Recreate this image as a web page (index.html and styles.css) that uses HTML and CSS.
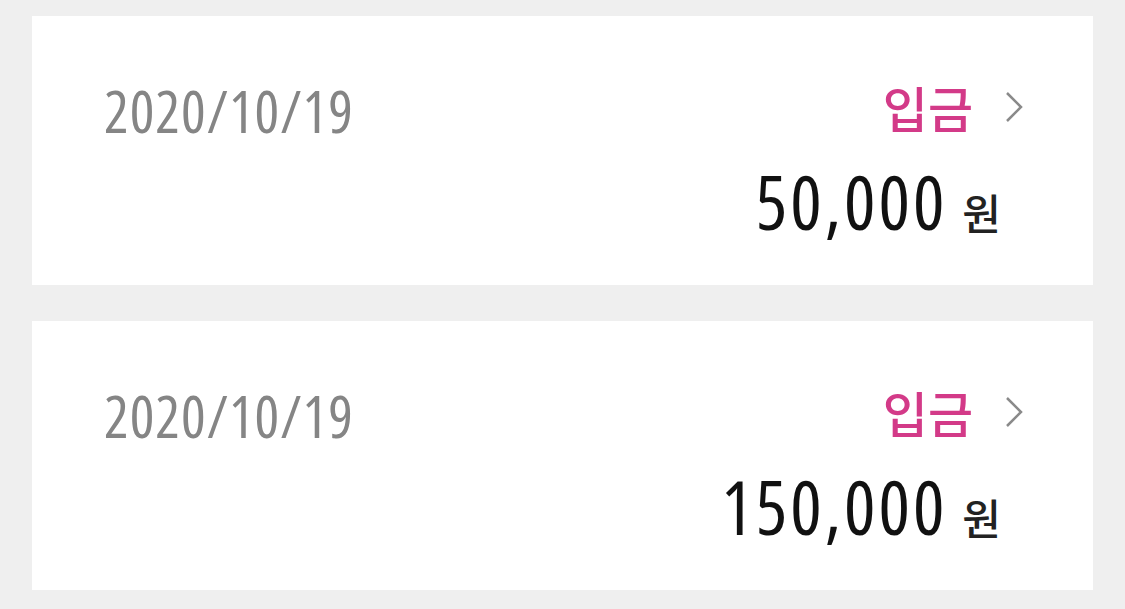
FILE: index.html
```html
<!DOCTYPE html>
<html lang="ko">
<head>
    <meta charset="UTF-8">
    <meta name="viewport" content="width=device-width, initial-scale=1.0">
    <title>입출금 내역</title>
    <link rel="stylesheet" href="styles.css">
</head>
<body>
    <div class="history-list">
        <div class="history-card">
            <div class="date">2020/10/19</div>
            <div class="detail">
                <a href="#" class="type-row">
                    <span class="type">입금</span>
                    <svg class="chevron" width="18" height="32" viewBox="0 0 18 32">
                        <polyline points="2,2 16,16 2,30" />
                    </svg>
                </a>
                <div class="amount-row">
                    <span class="amount">50,000</span>
                    <span class="unit">원</span>
                </div>
            </div>
        </div>
        <div class="history-card">
            <div class="date">2020/10/19</div>
            <div class="detail">
                <a href="#" class="type-row">
                    <span class="type">입금</span>
                    <svg class="chevron" width="18" height="32" viewBox="0 0 18 32">
                        <polyline points="2,2 16,16 2,30" />
                    </svg>
                </a>
                <div class="amount-row">
                    <span class="amount">150,000</span>
                    <span class="unit">원</span>
                </div>
            </div>
        </div>
    </div>
</body>
</html>
```

FILE: styles.css
```css
body {
    margin: 0;
    background: #efefef;
    font-family: "Open Sans", "Noto Sans CJK KR", sans-serif;
    font-stretch: 75%;
}

.history-list {
    display: flex;
    flex-direction: column;
    gap: 36px;
    padding: 16px 32px 18px;
}

.history-card {
    display: flex;
    justify-content: space-between;
    align-items: flex-start;
    height: 269px;
    box-sizing: border-box;
    padding: 66px 70px 0 72px;
    background: white;
}

.date {
    font-size: 58px;
    line-height: 1;
    letter-spacing: 1px;
    color: #858585;
}

.detail {
    display: flex;
    flex-direction: column;
    align-items: flex-end;
}

.type-row {
    display: flex;
    align-items: center;
    gap: 32px;
    text-decoration: none;
}

.type {
    font-family: "Noto Sans CJK KR", sans-serif;
    font-size: 49px;
    line-height: 1;
    font-weight: 500;
    color: #d33a88;
}

.chevron {
    fill: none;
    stroke: #8a8a8a;
    stroke-width: 2.5;
}

.amount-row {
    display: flex;
    align-items: baseline;
    gap: 15px;
    margin-top: 34px;
    margin-right: 22px;
}

.amount {
    font-size: 74px;
    line-height: 1;
    letter-spacing: 3px;
    color: #111;
}

.unit {
    font-family: "Noto Sans CJK KR", sans-serif;
    font-size: 42px;
    font-weight: 500;
    line-height: 1;
    color: #222;
}
```
